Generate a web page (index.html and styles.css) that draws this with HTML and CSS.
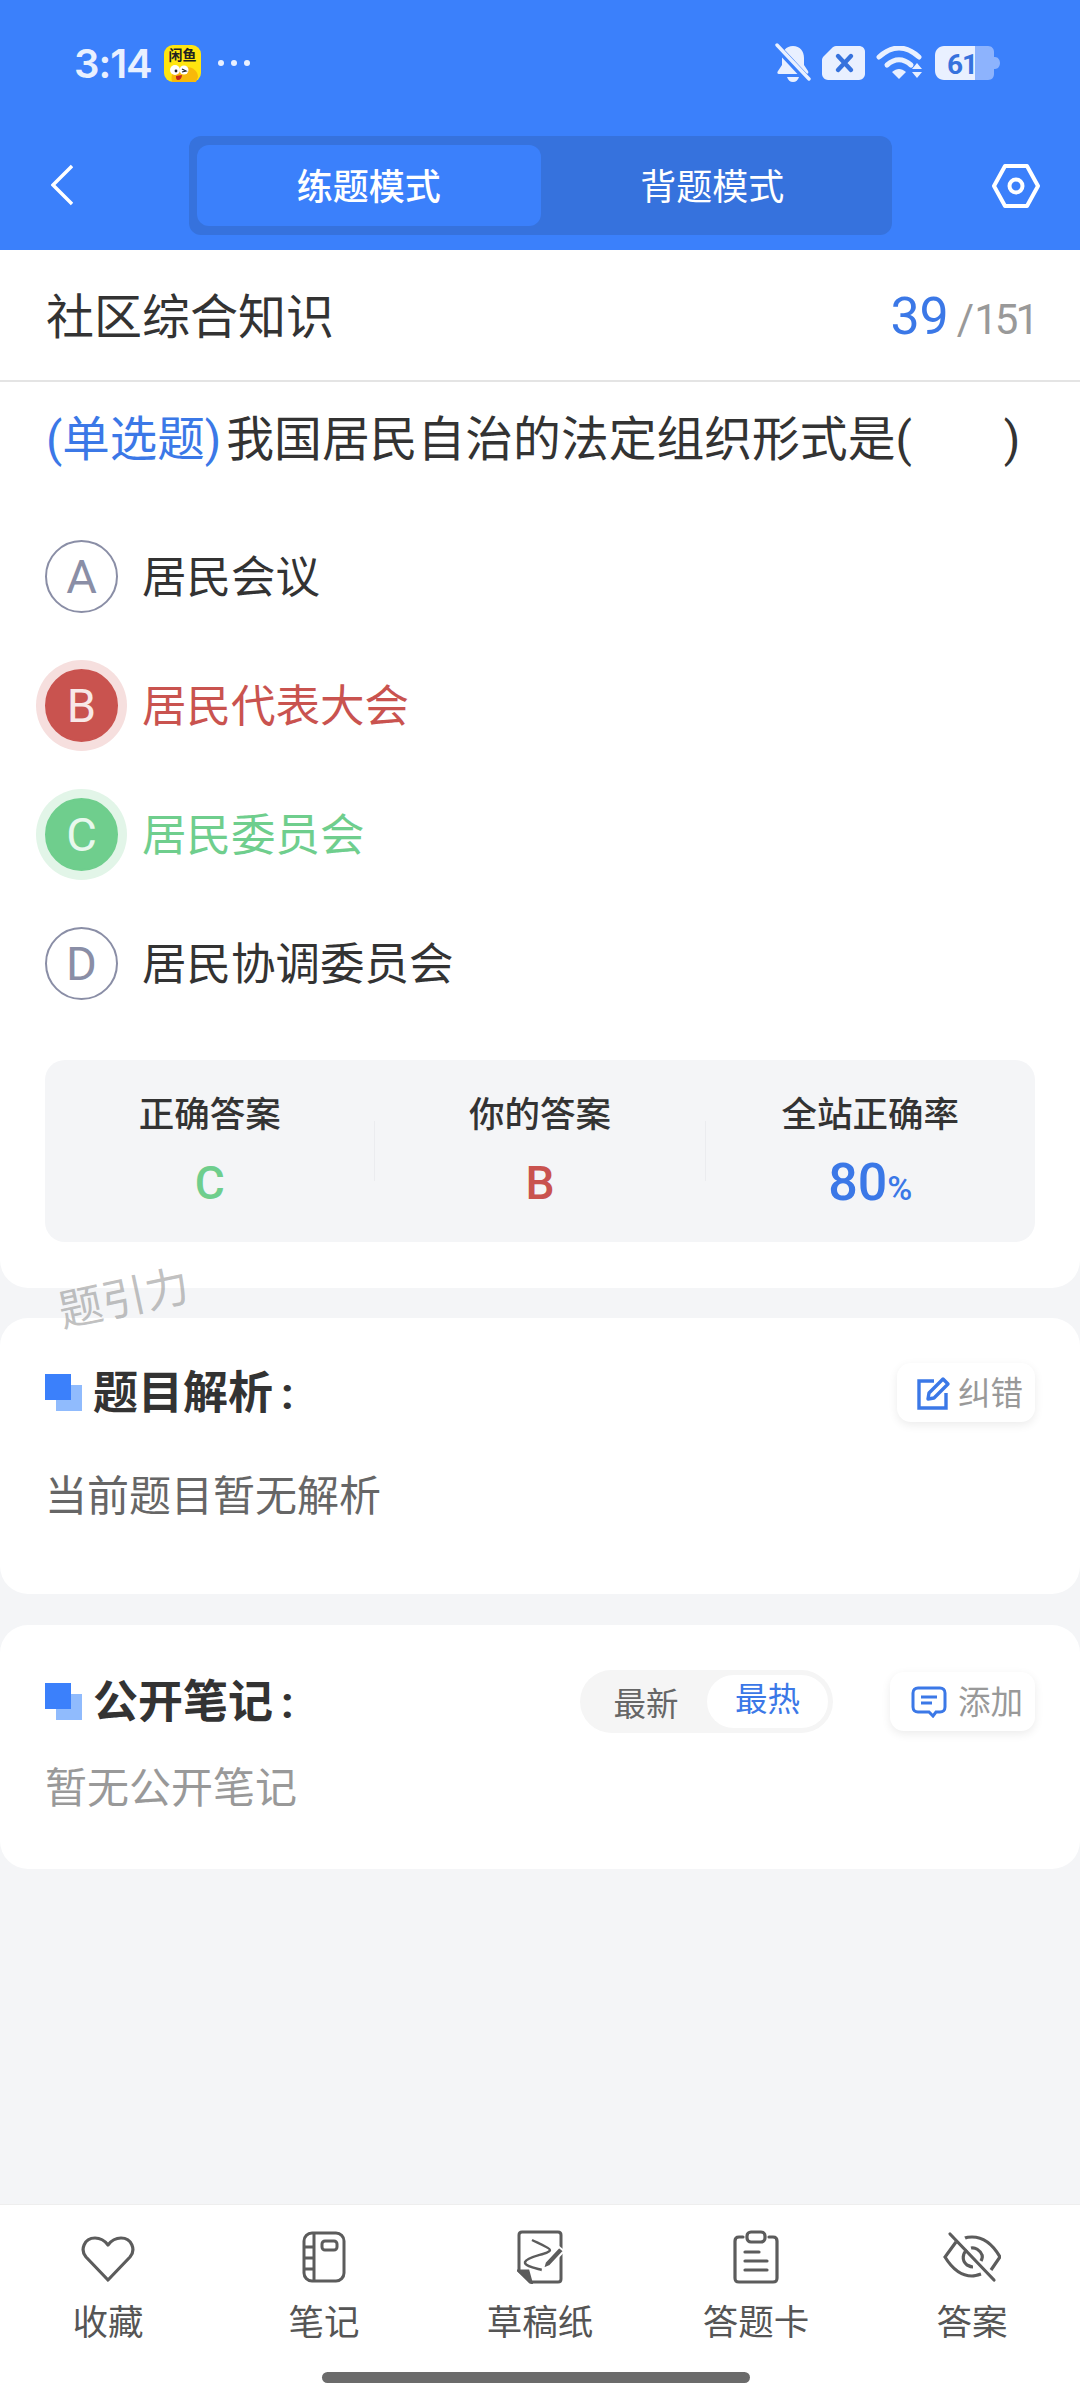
FILE: index.html
```html
<!DOCTYPE html>
<html lang="zh-CN">
<head>
   <meta charset="UTF-8"><title>练题模式</title>
   <link rel="stylesheet" href="styles.css">
</head> <body>

<header class="top">
   <div class="status">
      <span class="time">3:14</span>
      <svg class="app-icon" width="37" height="37" viewBox="0 0 37 37">
         <rect width="37" height="37" rx="9" fill="#ffe50f"/>
         <text x="18.5" y="15" text-anchor="middle" class="app-text">闲鱼</text>
         <path d="M8 37c-2-8 2-15 14-15 8 0 12 5 12 10l-2 5z" fill="#f8b90a"/>
         <circle cx="11" cy="25" r="5" fill="#fff"/>
         <circle cx="20" cy="25" r="4.5" fill="#fff"/>
         <circle cx="12" cy="26" r="1.4" fill="#222"/>
         <path d="M18 24l4 2-4 1" fill="none" stroke="#222" stroke-width="1.2"/>
         <path d="M12 31l6-1c0 3-2 5-4 5s-2-2-2-4z" fill="#c2261c"/>
      </svg>
      <span class="dots"><i></i><i></i><i></i></span>
      <span class="status-right">
         <svg width="36" height="40" viewBox="0 0 36 40">
            <path d="M18 3c7 0 11 5 11 12v7l4 6c1 2 0 3-2 3H4c-2 0-2-2-1-3l4-6v-7C7 8 11 3 18 3z" fill="#e9f0ff"/>
            <path d="M12 34h12c-1 3-3 5-6 5s-5-2-6-5z" fill="#e9f0ff"/>
            <path d="M4 6l28 30" stroke="#3b80fb" stroke-width="7"/>
            <path d="M2 2l32 34" stroke="#e9f0ff" stroke-width="3.4" stroke-linecap="round"/>
         </svg>
         <svg width="43" height="34" viewBox="0 0 43 34">
            <path d="M14 0h23c3 0 6 2 6 6v22c0 3-3 6-6 6H6c-3 0-6-3-6-6V14c0-2 1-3 2-4l8-8c1-1 2-2 4-2z" fill="#e9f0ff"/>
            <path d="M16 10l13 14M29 10L16 24" stroke="#3672dd" stroke-width="4.4" stroke-linecap="round"/>
         </svg>
         <svg width="48" height="34" viewBox="0 0 48 34">
            <path d="M3 11C16 -1 30 -1 43 11" fill="none" stroke="#e9f0ff" stroke-width="5" stroke-linecap="round"/>
            <path d="M11 19c8-7 16-7 24 0" fill="none" stroke="#e9f0ff" stroke-width="5" stroke-linecap="round"/>
            <path d="M16 26c5-4 9-4 14 0l-7 7z" fill="#e9f0ff"/>
            <path d="M41 17l5 6H36zM36 26h10l-5 6z" fill="#e9f0ff"/>
         </svg>
         <svg width="65" height="34" viewBox="0 0 65 34">
            <path d="M30 0h23c4 0 6 3 6 6v5h1c3 0 5 3 5 6s-2 6-5 6h-1v5c0 3-2 6-6 6H30z" fill="#8db3fd"/>
            <path d="M9 0h31v34H9c-5 0-9-4-9-9V9c0-5 4-9 9-9z" fill="#e9f0ff"/>
            <text x="27" y="28" text-anchor="middle" class="batt-text">61</text>
         </svg>
      </span>
   </div>
   <nav class="nav">
      <svg class="back" width="22" height="42" viewBox="0 0 22 42"><path d="M21 2L2 21l19 19" fill="none" stroke="#fff" stroke-width="3.4"/></svg>
      <div class="tabs">
         <span class="tab tab-on">练题模式</span>
         <span class="tab">背题模式</span>
      </div>
      <svg width="48" height="44" viewBox="0 0 48 44">
         <path d="M13 2h22l11 20-11 20H13L2 22z" fill="none" stroke="#fff" stroke-width="4" stroke-linejoin="round"/>
         <circle cx="24" cy="22" r="6.5" fill="none" stroke="#fff" stroke-width="4"/>
      </svg>
   </nav>
</header>

<section class="card card-main">
   <div class="subject">
      <h1>社区综合知识</h1>
      <div class="count"><b>39</b><span>/</span><span>151</span></div>
   </div>
   <p class="question"><span class="kind">(单选题)</span>我国居民自治的法定组织形式是(<span class="blank"></span>)</p>
   <ul class="options">
      <li class="option"><span class="letter">A</span>居民会议</li>
      <li class="option wrong"><span class="letter">B</span>居民代表大会</li>
      <li class="option right"><span class="letter">C</span>居民委员会</li>
      <li class="option"><span class="letter">D</span>居民协调委员会</li>
   </ul>
   <div class="answers">
      <div class="answer"><h3>正确答案</h3><b class="green">C</b></div>
      <i class="sep"></i>
      <div class="answer"><h3>你的答案</h3><b class="red">B</b></div>
      <i class="sep"></i>
      <div class="answer"><h3>全站正确率</h3><b class="blue">80<small>%</small></b></div>
   </div>
</section>

<section class="card card-analysis">
   <div class="head">
      <span class="mark"></span>
      <h2>题目解析<span class="colon">:</span></h2>
      <button class="chip">
         <svg width="34" height="34" viewBox="0 0 34 34">
            <path d="M17 5H2v27h27V17" fill="none" stroke="#3b78e7" stroke-width="3.4"/>
            <path d="M11 23l1-6L26 3l5 5-14 14z" fill="none" stroke="#3b78e7" stroke-width="3.4" stroke-linejoin="round"/>
         </svg>纠错
      </button>
   </div>
   <p class="note">当前题目暂无解析</p>
</section>

<section class="card card-notes">
   <div class="head">
      <span class="mark"></span>
      <h2>公开笔记<span class="colon">:</span></h2>
      <div class="sort"><span>最新</span><span class="sort-on">最热</span></div>
      <button class="chip chip-add">
         <svg width="36" height="32" viewBox="0 0 36 32">
            <path d="M7 2h22c3 0 5 2 5 5v14c0 3-2 5-5 5h-4l-3 4-4-4H7c-3 0-5-2-5-5V7c0-3 2-5 5-5z" fill="none" stroke="#3b78e7" stroke-width="3"/>
            <path d="M10 11h16M10 17h11" stroke="#3b78e7" stroke-width="3"/>
         </svg>添加
      </button>
   </div>
   <p class="note note-empty">暂无公开笔记</p>
</section>

<div class="watermark">题引力</div>

<footer class="bar">
   <ul class="tools">
      <li>
         <svg width="54" height="52" viewBox="0 0 54 52"><path d="M27 49L5 26C-1 19 3 7 14 7c6 0 10 3 13 7 3-4 7-7 13-7 11 0 15 12 9 19z" fill="none" stroke="#5c5c5c" stroke-width="3.2" stroke-linejoin="round"/></svg>
         收藏
      </li>
      <li>
         <svg width="44" height="52" viewBox="0 0 44 52" fill="none" stroke="#5c5c5c" stroke-width="3">
            <rect x="2" y="2" width="40" height="48" rx="8"/>
            <path d="M12 2v48M2 16h10M2 27h10M2 38h10"/>
            <rect x="20" y="10" width="15" height="9" rx="3"/>
         </svg>
         笔记
      </li>
      <li>
         <svg width="46" height="54" viewBox="0 0 46 54" fill="none" stroke="#5c5c5c" stroke-width="3">
            <path d="M13 52H41c2 0 3-1 3-3V5c0-2-1-3-3-3H5C3 2 2 3 2 5v36z"/>
            <path d="M2 41h9l3 11z" fill="#5c5c5c"/>
            <path d="M15 10c6 3 18 8 18 10 0 4-23 6-25 12-1 4 10 6 17 8" stroke-width="2.4"/>
            <path d="M26 39l2-7 14-15 5 4-14 15z" fill="#5c5c5c" stroke="#fff" stroke-width="2"/>
         </svg>
         草稿纸
      </li>
      <li>
         <svg width="46" height="54" viewBox="0 0 46 54" fill="none" stroke="#5c5c5c" stroke-width="3.2" stroke-linecap="round">
            <path d="M10 7H6C3 7 2 9 2 11v37c0 3 1 4 4 4h34c3 0 4-1 4-4V11c0-2-1-4-4-4h-4"/>
            <rect x="14" y="2" width="18" height="10" rx="4"/>
            <path d="M12 22h14M12 31h22M12 40h22"/>
         </svg>
         答题卡
      </li>
      <li>
         <svg width="58" height="48" viewBox="0 0 58 48" fill="none" stroke="#5c5c5c" stroke-width="3.2">
            <path d="M13 9L2 24c8 13 17 19 27 19 3 0 6-1 9-2M22 5c2-1 5-1 7-1 11 0 20 6 28 20l-9 13"/>
            <path d="M24 17c-4 3-6 10 0 15 2 1 4 2 6 2M28 15c4-1 9 2 11 7 1 2 0 4-1 6"/>
            <path d="M7 1l44 46" stroke-linecap="round"/>
         </svg>
         答案
      </li>
   </ul>
   <div class="home-line"></div>
</footer>

</body> </html>
```

FILE: styles.css
```css
* {
   box-sizing: border-box;
}

html, body {
   margin: 0;
   padding: 0;
}

body {
   position: relative;
   width: 1080px;
   height: 2400px;
   overflow: hidden;
   display: flex;
   flex-direction: column;
   background: #f4f5f7;
   color: #333;
   font-family: Roboto, "Noto Sans CJK SC", sans-serif;
}

h1, h2, h3, p, ul {
   margin: 0;
   padding: 0;
   font-weight: 400;
}

ul {
   list-style: none;
}

/* top */
.top {
   background: #3b80fb;
   color: #fff;
}

.status {
   height: 126px;
   padding: 0 80px 0 74px;
   display: flex;
   align-items: center;
}

.time {
   font-family: Inter, sans-serif;
   font-size: 40px;
   font-weight: 600;
   color: #e9f0ff;
   letter-spacing: -1px;
}

.app-icon {
   margin-left: 12px;
}

.app-text {
   font-size: 14px;
   font-weight: 700;
   fill: #222;
}

.dots {
   margin-left: 17px;
   display: flex;
   gap: 7px;
}

.dots i {
   width: 6px;
   height: 6px;
   border-radius: 50%;
   background: #e9f0ff;
}

.status-right {
   margin-left: auto;
   display: flex;
   align-items: center;
   gap: 11px;
}

.batt-text {
   font-size: 28px;
   font-weight: 700;
   fill: #3672dd;
   letter-spacing: -1px;
}

.nav {
   height: 124px;
   padding: 10px 40px 15px 51px;
   display: flex;
   align-items: center;
   justify-content: space-between;
}

.back {
   margin-bottom: 2px;
}

.tabs {
   width: 703px;
   height: 99px;
   margin-left: 116px;
   margin-right: auto;
   padding: 9px 8px;
   display: flex;
   background: #3672dd;
   border-radius: 12px;
}

.tab {
   flex: 1;
   padding-bottom: 3px;
   display: flex;
   align-items: center;
   justify-content: center;
   font-size: 36px;
   border-radius: 12px;
}

.tab-on {
   background: #3b80fb;
   font-weight: 500;
}

/* cards */
.card {
   background: #fff;
   border-radius: 28px;
}

.card-main {
   height: 1038px;
   border-radius: 0 0 28px 28px;
}

.card-analysis {
   height: 276px;
   margin-top: 30px;
   padding: 45px 45px 0;
}

.card-notes {
   height: 244px;
   margin-top: 31px;
   padding: 45px 45px 0;
}

.subject {
   height: 132px;
   padding: 0 44px 4px 46px;
   display: flex;
   align-items: center;
   justify-content: space-between;
   border-bottom: 2px solid #e4e4e4;
}

.subject h1 {
   font-size: 48px;
}

.count {
   display: flex;
   align-items: baseline;
   margin-top: 6px;
   color: #999;
   font-size: 42px;
   gap: 8px;
}

.count b {
   font-size: 52px;
   font-weight: 400;
   color: #3b78e7;
}

.count span + span {
   margin-left: -8px;
   letter-spacing: -3px;
}

.question {
   height: 128px;
   padding: 28px 0 0 46px;
   font-size: 47.8px;
   line-height: 60px;
   white-space: nowrap;
}

.kind {
   margin-right: 5px;
   color: #3b78e7;
   font-size: 47.5px;
}

.blank {
   display: inline-block;
   width: 92px;
}

.option {
   height: 129px;
   padding: 0 0 3px 45px;
   display: flex;
   align-items: center;
   gap: 24px;
   font-size: 44.5px;
}

.letter {
   width: 73px;
   height: 73px;
   margin-top: 6px;
   display: flex;
   align-items: center;
   justify-content: center;
   border: 2px solid #8a8ea6;
   border-radius: 50%;
   color: #8a8ea6;
   font-size: 47px;
}

.wrong {
   color: #c9534f;
}

.wrong .letter {
   background: #c9534f;
   border-color: #c9534f;
   color: #f8e8e7;
   box-shadow: 0 0 0 9px #f6dfde;
}

.right {
   color: #6fce8d;
}

.right .letter {
   background: #6fce8d;
   border-color: #6fce8d;
   color: #e8f8ed;
   box-shadow: 0 0 0 9px #e2f5e8;
}

.answers {
   height: 182px;
   margin: 34px 45px 0;
   padding-top: 31px;
   display: flex;
   background: #f4f5f7;
   border-radius: 20px;
}

.answer {
   flex: 1;
   text-align: center;
}

.answer h3 {
   font-size: 35.5px;
   font-weight: 500;
   line-height: 48px;
}

.answer b {
   display: block;
   margin-top: 20px;
   font-size: 46px;
   font-weight: 500;
   line-height: 48px;
}

.answer .blue {
   font-size: 52px;
}

.answer small {
   font-size: 34px;
}

.green {
   color: #6fce8d;
}

.red {
   color: #c9534f;
}

.blue {
   color: #3b78e7;
}

.sep {
   width: 1px;
   height: 60px;
   margin-top: 30px;
   background: #ebecef;
}

/* sections */
.head {
   display: flex;
   align-items: center;
   height: 59px;
}

.card-notes .head {
   height: 63px;
}

.mark {
   position: relative;
   width: 37px;
   height: 37px;
   margin-right: 11px;
   background: linear-gradient(#3b80fb, #3b80fb) 0 0 / 26px 26px no-repeat,
      linear-gradient(#90bbfd, #90bbfd) 100% 100% / 26px 26px no-repeat;
}

.head h2 {
   padding-bottom: 6px;
   font-size: 45px;
   font-weight: 700;
   margin-right: auto;
}

.colon {
   margin-left: 8px;
}

.chip {
   flex: none;
   display: flex;
   align-items: center;
   gap: 7px;
   width: 138px;
   height: 59px;
   padding: 0 0 5px 20px;
   border: none;
   border-radius: 14px;
   background: #fff;
   box-shadow: 0 3px 10px rgba(0, 0, 0, .08);
   color: #999;
   font-family: inherit;
   font-size: 32.5px;
}

.chip svg {
   margin-top: 5px;
}

.chip-add {
   width: 145px;
   margin-left: 57px;
   padding-left: 21px;
   gap: 11px;
}

.sort {
   flex: none;
   width: 253px;
   height: 63px;
   padding: 5px;
   display: flex;
   align-items: center;
   background: #f5f5f5;
   border-radius: 32px;
   font-size: 32.5px;
   color: #666;
}

.sort span {
   flex: 1;
   padding-bottom: 1px;
   text-align: center;
}

.sort .sort-on {
   flex: 0 0 121px;
   height: 53px;
   line-height: 51px;
   background: #fff;
   border-radius: 27px;
   color: #3b78e7;
}

.note {
   margin-top: 46px;
   font-size: 42px;
   line-height: 58px;
   color: #666;
}

.note-empty {
   margin-top: 27px;
   color: #999;
}

/* sits over the first two cards */
.watermark {
   position: absolute;
   left: 57px;
   top: 1263px;
   font-size: 44px;
   color: rgba(140, 140, 140, .55);
   transform: rotate(-12deg);
}

/* bottom */
.bar {
   margin-top: auto;
   height: 196px;
   padding-top: 25px;
   background: #fff;
   border-top: 1px solid #eee;
}

.tools {
   display: flex;
}

.tools li {
   flex: 1;
   display: flex;
   flex-direction: column;
   align-items: center;
   height: 115px;
   gap: 17px;
   font-size: 35.5px;
   line-height: 44px;
   color: #555;
}

.tools svg {
   height: 54px;
   flex: none;
}

.home-line {
   width: 428px;
   height: 11px;
   margin: 27px 0 0 322px;
   background: #6b6b6b;
   border-radius: 6px;
}
```
